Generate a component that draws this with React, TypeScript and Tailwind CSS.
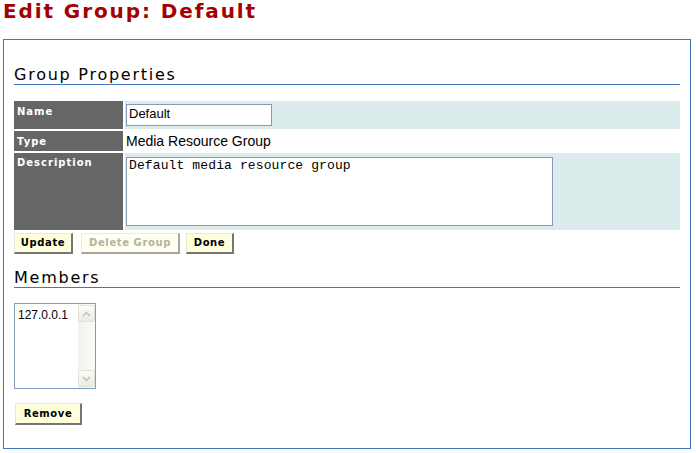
import React from "react";

function Btn({ label, w, h = "h-[21px]", disabled = false }: { label: string; w: string; h?: string; disabled?: boolean }) {
  return (
    <div
      className={`${w} ${h} flex items-center justify-center border-t border-l border-r-2 border-b-2 ${
        disabled
          ? "bg-[#fffff2] border-t-[#ecebdc] border-l-[#ecebdc] border-r-[#a6a69c] border-b-[#a6a69c] text-[#b4b2a4]"
          : "bg-[#ffffdc] border-t-[#e8e8d4] border-l-[#e8e8d4] border-r-[#767670] border-b-[#767670] text-black"
      } font-['DejaVu_Sans',Verdana,sans-serif] font-bold text-[10px] leading-[12px] tracking-[0.6px]`}
    >
      {label}
    </div>
  );
}

function ArrowBtn({ up }: { up: boolean }) {
  return (
    <div className="w-[17px] h-[17px] rounded-[2px] border border-[#e4e2d8] bg-gradient-to-b from-[#fbfbf8] to-[#ecebe3] flex items-center justify-center">
      <svg width="9" height="6" viewBox="0 0 9 6">
        <path
          d={up ? "M1 5 L4.5 1.5 L8 5" : "M1 1 L4.5 4.5 L8 1"}
          fill="none"
          stroke="#c6c4b6"
          strokeWidth="1.6"
        />
      </svg>
    </div>
  );
}

export default function App() {
  return (
    <div className="w-[696px] h-[453px] bg-white overflow-hidden">
      <h1 className="ml-[3px] h-[39px] text-[20px] leading-[23px] font-bold text-[#a40000] tracking-[1.9px] font-['DejaVu_Sans',Verdana,sans-serif]">
        Edit Group: Default
      </h1>
      <div className="ml-[3px] w-[688px] h-[410px] border border-[#4677bd] pt-[26px] px-[10px]">
        <div className="leading-[18px] border-b border-[#4677bd] text-[16px] tracking-[1.75px] text-black font-['DejaVu_Sans',Verdana,sans-serif]">
          Group Properties
        </div>

        <div className="mt-[16px] flex flex-col gap-[2px]">
          <div className="flex h-[28px] gap-[2px]">
            <div className="w-[109px] bg-[#666666] pl-[3px] pt-[5px] text-white font-bold text-[10px] leading-[12px] tracking-[1px] font-['DejaVu_Sans',Verdana,sans-serif]">
              Name
            </div>
            <div className="flex-1 bg-[#dcecec] pl-[1px] pt-[3px]">
              <div className="w-[146px] h-[22px] bg-white border border-[#7f9db9] pl-[2px] pt-[1px] text-[13px] leading-[16px] text-black font-['Liberation_Sans',Arial,sans-serif]">
                Default
              </div>
            </div>
          </div>
          <div className="flex h-[20px] gap-[2px]">
            <div className="w-[109px] bg-[#666666] pl-[3px] pt-[5px] text-white font-bold text-[10px] leading-[12px] tracking-[1px] font-['DejaVu_Sans',Verdana,sans-serif]">
              Type
            </div>
            <div className="flex-1 bg-white pl-[1px] text-[14px] leading-[20px] text-black font-['Liberation_Sans',Arial,sans-serif]">
              Media Resource Group
            </div>
          </div>
          <div className="flex h-[77px] gap-[2px]">
            <div className="w-[109px] bg-[#666666] pl-[3px] pt-[4px] text-white font-bold text-[10px] leading-[12px] tracking-[1px] font-['DejaVu_Sans',Verdana,sans-serif]">
              Description
            </div>
            <div className="flex-1 bg-[#dcecec] pl-[1px] pt-[4px]">
              <div className="w-[427px] h-[69px] bg-white border border-[#7f9db9] pl-[2px] pt-[1px] text-[13px] leading-[14px] tracking-[0.12px] text-black font-['Liberation_Mono','Courier_New',monospace]">
                Default media resource group
              </div>
            </div>
          </div>
        </div>

        <div className="mt-[3px] flex">
          <Btn label="Update" w="w-[59px]" />
          <div className="ml-[8px]">
            <Btn label="Delete Group" w="w-[99px]" disabled />
          </div>
          <div className="ml-[6px]">
            <Btn label="Done" w="w-[48px]" />
          </div>
        </div>

        <div className="mt-[15px] leading-[18px] border-b border-[#4677bd] text-[16px] tracking-[1.75px] text-black font-['DejaVu_Sans',Verdana,sans-serif]">
          Members
        </div>

        <div className="mt-[15px] w-[82px] h-[86px] border border-[#7f9db9] bg-white flex">
          <div className="flex-1 pl-[3px] pt-[4px] text-[12px] leading-[14px] text-black font-['Liberation_Sans',Arial,sans-serif]">
            127.0.0.1
          </div>
          <div className="w-[17px] h-full bg-gradient-to-r from-[#f3f2ec] to-[#fbfbf8] flex flex-col justify-between py-[1px]">
            <ArrowBtn up />
            <ArrowBtn up={false} />
          </div>
        </div>

        <div className="mt-[14px] ml-[1px]">
          <Btn label="Remove" w="w-[67px]" h="h-[22px]" />
        </div>
      </div>
    </div>
  );
}
